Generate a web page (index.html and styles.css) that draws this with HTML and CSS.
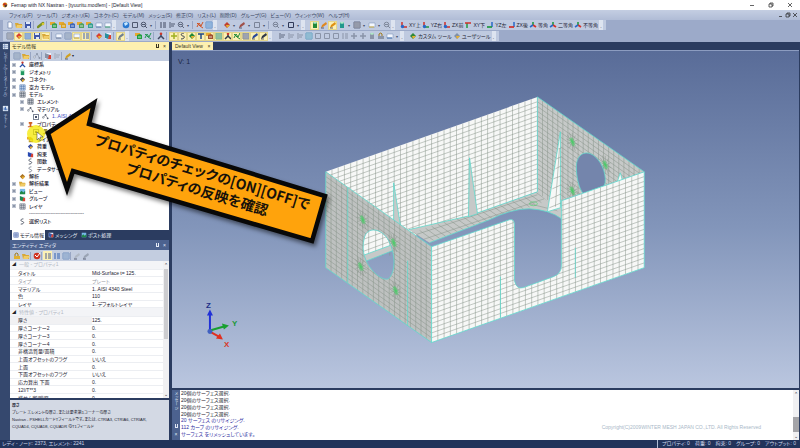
FILE: index.html
```html
<!DOCTYPE html>
<html lang="ja">
<head>
  <meta charset="UTF-8" />
  <title>Femap with NX Nastran</title>
  <meta name="viewport" content="width=device-width, initial-scale=1.0" />
  <link rel="stylesheet" href="styles.css">
</head>
<body>
  <header class="titlebar">
    <svg class="logo" viewBox="0 0 8 8"><circle cx="4" cy="4" r="3.2" fill="#e8a020"/><path d="M1 3l3-2 2 2-3 2z" fill="#c03020"/><path d="M3 5l4-2-1 3-2 1z" fill="#303048"/></svg>
    <span>Femap with NX Nastran - [tyuuritu.modfem] - [Default View]</span>
    <div class="win-btns">
      <button aria-label="最小化"><svg viewBox="0 0 6 6"><path d="M1 3.5h4"/></svg></button>
      <button aria-label="元に戻す"><svg viewBox="0 0 6 6"><path d="M1 2h3v3H1zM2 2V1h3v3H4"/></svg></button>
      <button aria-label="閉じる"><svg viewBox="0 0 6 6"><path d="M1 1l4 4M5 1L1 5"/></svg></button>
    </div>
  </header>

  <nav class="menubar">
    <button>ファイル(F)</button><button>ツール(T)</button><button>ジオメトリ(E)</button><button>コネクト(C)</button><button>モデル(M)</button><button>メッシュ(S)</button><button>修正(O)</button><button>リスト(L)</button><button>削除(D)</button><button>グループ(G)</button><button>ビュー(V)</button><button>ウィンドウ(W)</button><button>ヘルプ(H)</button>
    <div class="win-btns small">
      <button aria-label="最小化"><svg viewBox="0 0 6 6"><path d="M1 4.5h3"/></svg></button>
      <button aria-label="元に戻す"><svg viewBox="0 0 6 6"><path d="M1 2h3v3H1zM2 2V1h3v3H4"/></svg></button>
      <button aria-label="閉じる"><svg viewBox="0 0 6 6"><path d="M1 1l4 4M5 1L1 5"/></svg></button>
    </div>
  </nav>

  <div class="toolbar" id="bar1"></div>
  <div class="toolbar" id="bar2"></div>

  <main class="work">
    <aside class="dock">
      <svg viewBox="0 0 8 8"><path d="M1 1h6v6H1z" fill="#dfe8f5"/><path d="M1 3h6M1 5h6M3 1v6" stroke="#6f88b5" stroke-width=".7"/></svg>
      <button>レポート(データテーブル)</button>
      <svg viewBox="0 0 8 8"><path d="M1 1h6v6H1z" fill="#dfe8f5"/><path d="M2.5 6V3M4 6V2M5.5 6V4" stroke="#3060b0"/></svg>
      <button>チャート</button>
    </aside>

    <section class="side">
      <div class="pane-head active"><h2>モデル情報</h2><i class="pin"></i><button aria-label="閉じる">×</button></div>
      <div class="mini" id="treeBar"></div>
      <div class="tree-box"><ul class="tree" id="tree"></ul></div>
      <div class="tabs">
        <button class="on"><svg viewBox="0 0 8 8"><use href="#i-grid"/></svg>モデル情報</button>
        <button><svg viewBox="0 0 8 8"><use href="#i-flag"/></svg>メッシング</button>
        <button><svg viewBox="0 0 8 8"><use href="#i-view"/></svg>ポスト処理</button>
      </div>
      <div class="pane-head"><h2>エンティティ エディタ</h2><i class="pin"></i><button aria-label="閉じる">×</button></div>
      <div class="mini" id="entityBar"></div>
      <div class="props">
        <table>
          <tbody>
            <tr class="cat"><th colspan="2">一般 - プロパティ1</th></tr>
            <tr><td>タイトル</td><td>Mid-Surface t= 125.</td></tr>
            <tr class="dim"><td>タイプ</td><td>プレート</td></tr>
            <tr><td>マテリアル</td><td>1..AISI 4340 Steel</td></tr>
            <tr><td>色</td><td>110</td></tr>
            <tr><td>レイヤ</td><td>1..デフォルトレイヤ</td></tr>
            <tr class="cat"><th colspan="2">特性値 - プロパティ1</th></tr>
            <tr class="sel"><td>厚さ</td><td>125.</td></tr>
            <tr><td>厚さコーナー2</td><td>0.</td></tr>
            <tr><td>厚さコーナー3</td><td>0.</td></tr>
            <tr><td>厚さコーナー4</td><td>0.</td></tr>
            <tr><td>非構造質量/面積</td><td>0.</td></tr>
            <tr><td>上面オフセットのフラグ</td><td>いいえ</td></tr>
            <tr><td>上面</td><td>0.</td></tr>
            <tr><td>下面オフセットのフラグ</td><td>いいえ</td></tr>
            <tr><td>応力算出 下面</td><td>0.</td></tr>
            <tr><td>12I/T**3</td><td>0.</td></tr>
            <tr><td>横せん断/膜厚</td><td>0.</td></tr>
          </tbody>
        </table>
        <div class="scroll"><i>⌃</i><b></b><i>⌄</i></div>
      </div>
      <div class="help">
        <strong>厚さ</strong>
        <p>プレート エレメントの厚さ、または要素第1コーナーの厚さ</p>
        <p>Nastran - PSHELLカードTフィールドです。または、CTRIA3, CTRIA6, CTRIAR,</p>
        <p>CQUAD4, CQUAD8, CQUADR のT1フィールド</p>
      </div>
    </section>

    <section class="stage">
      <div class="view-tabs"><button>Default View <span>×</span></button></div>
      <div class="canvas">
        <svg id="model" viewBox="172 50 628 338" preserveAspectRatio="xMinYMin slice">
          <defs>
            <clipPath id="c-back"><path d="M326 171L538 96V191L432 229V246z"/></clipPath>
            <clipPath id="c-right"><path clip-rule="evenodd" d="M538 96L645 171L562 200L560 214L538 191zM577 166C577 153 587 148 596 156C604 163 608 177 605 185L584 193C579 187 577 175 577 166z"/></clipPath>
            <clipPath id="c-left"><path clip-rule="evenodd" d="M326 171L432 246V342L326 267zM365 236C368 226 382 227 389 240C396 253 396 270 390 277C386 282 374 274 368 263C362 252 363 243 365 236z"/></clipPath>
            <clipPath id="c-front"><path d="M432 246L510 219Q515 218 515 224V280Q517 289 524 287L554 276Q562 273 562 265V200L645 171V267L432 342z"/></clipPath>
            <clipPath id="c-hole"><path d="M365 236C368 226 382 227 389 240C396 253 396 270 390 277C386 282 374 274 368 263C362 252 363 243 365 236z"/></clipPath>
            <clipPath id="c-floor"><path d="M409 229L470 215L538 191L562 205V218Q550 209 530 208Q512 208 490 219L430 242z"/></clipPath>
          </defs>

          <!-- back wall and floor strip -->
          <path class="white" d="M326 171L538 96V191L410 237z"/>
          <g id="m-back" clip-path="url(#c-back)"></g>
          <path class="gray" d="M409 229L470 215L538 191L562 205V218Q550 209 530 208Q512 208 490 219L430 242z"/>
          <g id="m-floor" clip-path="url(#c-floor)"></g>
          <path class="edge" d="M409 229L470 215L538 191M430 242L490 219Q512 208 530 208Q550 209 562 218"/>
          <path class="gray edge" d="M394 182L394 219L401 226zM470 157L469 216L478 213z"/>

          <!-- far right wall -->
          <path class="gray" d="M538 96L645 171L562 200V214L538 191z"/>
          <g id="m-right" clip-path="url(#c-right)"></g>
          <path class="void edge" d="M577 166C577 153 587 148 596 156C604 163 608 177 605 185L584 193C579 187 577 175 577 166z"/>
          <path class="edge" d="M538 191V96L645 171"/>
          <path class="white edge" d="M561 131V207L548 211z"/>
          <path class="rib" d="M550 207l12-5M551 198l11-5M553 188l9-4M554 178l8-3M556 168l6-3M557 158l5-2M559 148l3-1M556 206l4-58"/>
          <path class="white edge" d="M618 181L621 172L623 179z"/>
          <ellipse class="green" cx="534" cy="203" rx="4" ry="2"/>

          <!-- near left wall -->
          <path class="gray near" fill-rule="evenodd" d="M326 171L432 246V342L326 267zM365 236C368 226 382 227 389 240C396 253 396 270 390 277C386 282 374 274 368 263C362 252 363 243 365 236z"/>
          <g clip-path="url(#c-hole)">
            <path class="white" d="M360 225H398V245L360 259z"/>
            <path class="line" d="M360 240l38-14M360 246l38-14M360 252l38-14M369 225v30M376 225v30M383 225v30M390 225v30"/>
            <path class="gray edge" d="M360 256L398 242V248L360 263z"/>
          </g>
          <g id="m-left" clip-path="url(#c-left)"></g>
          <path class="edge" d="M348 187V282M408 260V325"/>
          <path class="edge" d="M326 171L432 246V342L326 267zM365 236C368 226 382 227 389 240C396 253 396 270 390 277C386 282 374 274 368 263C362 252 363 243 365 236z"/>

          <!-- near right wall with the door cut-out -->
          <path class="white" d="M432 246L510 219Q515 218 515 224V280Q517 289 524 287L554 276Q562 273 562 265V200L645 171V267L432 342z"/>
          <g id="m-front" clip-path="url(#c-front)"></g>
          <path class="edge" d="M432 246L510 219Q515 218 515 224V280Q517 289 524 287L554 276Q562 273 562 265V200L645 171V267L432 342z"/>
          <path class="edge" d="M501 276V317M576 247V277"/>
          <g id="bolts"></g>

          <!-- triad -->
          <path d="M210 331V314" stroke="#2030d8" stroke-width="2"/><path d="M207 315l3-6 3 6z" fill="#2030d8"/>
          <path d="M210 330L224 326" stroke="#18a030" stroke-width="2"/><path d="M222 323l7 2-5 4z" fill="#18a030"/>
          <path d="M210 331L219 336" stroke="#e03020" stroke-width="2"/><path d="M220 333l3 6-7-1z" fill="#e03020"/>
          <circle cx="210" cy="331" r="2.5" fill="#4060c0"/>
          <text x="206" y="307" class="axis z">Z</text><text x="232" y="325" class="axis y">Y</text><text x="224" y="346" class="axis x">X</text>
          <text x="178" y="63" class="vlabel">V: 1</text>
        </svg>
      </div>
      <div class="log">
        <div class="log-side"><span>メッセージ</span><i class="pin"></i><button aria-label="閉じる">×</button></div>
        <div class="log-body">
          <div class="lines">
            <p>20個のサーフェス選択.</p>
            <p>20個のサーフェス選択.</p>
            <p>20個のサーフェス選択.</p>
            <p>20個のサーフェス選択.</p>
            <p class="info">20 サーフェス のリサイジング.</p>
            <p class="info">112 カーブ のリサイジング.</p>
            <p class="info">サーフェス をリメッシュしています。</p>
          </div>
          <small>Copyright(C)2009WINTER MESH JAPAN CO.,LTD. All Rights Reserved</small>
        </div>
        <div class="scroll low"><i>⌃</i><b></b><i>⌄</i></div>
      </div>
    </section>
  </main>

  <footer class="status">
    <span>レディ - ノード: 2373, エレメント: 2241</span>
    <div><span>プロパティ: 0</span><span>荷重: 0</span><span>拘束: 0</span><span>グループ: 0</span><span>アウトプット: 0</span></div>
  </footer>

  <div class="callout">
    <svg viewBox="0 0 310 170">
      <circle cx="16" cy="44" r="9" fill="#f4e800" fill-opacity=".75"/>
      <path class="arrow" d="M28 43L74 13L69 34L305 106L292 151L53 81L47 99z"/>
      <path d="M17 42v8l2-2 1 3 1-1-1-3h3z" fill="#fff" stroke="#333" stroke-width=".5"/>
    </svg>
    <p>プロパティのチェックの[ON][OFF]で<br>プロパティの反映を確認</p>
  </div>

  <svg class="sprite">
    <symbol id="i-new" viewBox="0 0 8 8"><path d="M2 1h3l1 1v5H2z" fill="#fff" stroke="#5870a0" stroke-width=".6"/></symbol>
    <symbol id="i-open" viewBox="0 0 8 8"><path d="M0 2h3l1 1h3v4H1z" fill="#d8a838"/><path d="M2 4h6L6 7H1z" fill="#f0cc68"/></symbol>
    <symbol id="i-save" viewBox="0 0 8 8"><path d="M1 1h6v6H1z" fill="#4058a8"/><path d="M2 1h4v2H2zM3 5h3v2H3z" fill="#dfe8f8"/></symbol>
    <symbol id="i-link" viewBox="0 0 8 8"><path d="M1 6L6 2" stroke="#789020" stroke-width="2.5" stroke-linecap="round"/><circle cx="6" cy="3" r="1.3" fill="#d8c830"/></symbol>
    <symbol id="i-cube" viewBox="0 0 8 8"><path d="M0 1h5v3H0z" fill="#e8a830"/><path d="M2 3l3-1 2 1v4H2z" fill="currentColor"/><path d="M3 5h3" stroke="#fff" stroke-width=".7"/></symbol>
    <symbol id="i-page" viewBox="0 0 8 8"><path d="M1 2h6v4H1z" fill="#f4f8ff" stroke="#7088b0" stroke-width=".5"/><path d="M1 6h5" stroke="currentColor"/></symbol>
    <symbol id="i-ball" viewBox="0 0 8 8"><circle cx="4" cy="4" r="3.3" fill="#2878d0"/><path d="M2 2l3-1 1 2-3 2z" fill="#c8e8ff"/></symbol>
    <symbol id="i-box" viewBox="0 0 8 8"><path d="M1.5 1.5h5v5h-5z" fill="none" stroke="currentColor"/></symbol>
    <symbol id="i-zoom" viewBox="0 0 8 8"><circle cx="3.5" cy="3.5" r="2.3" fill="none" stroke="currentColor"/><path d="M5 5l2 2M2 3.5h3" stroke="currentColor"/></symbol>
    <symbol id="i-grid" viewBox="0 0 8 8"><path d="M1 1h6v6H1z" fill="#eef2f8" stroke="currentColor" stroke-width=".7"/><path d="M1 3h6M1 5h6M3 1v6M5 1v6" stroke="currentColor" stroke-width=".6"/></symbol>
    <symbol id="i-list" viewBox="0 0 8 8"><path d="M1 2h2M1 4h2M1 6h2M4 2h3M4 4h3M4 6h3" stroke="currentColor"/></symbol>
    <symbol id="i-flag" viewBox="0 0 8 8"><path d="M1 1h6v6H1z" fill="#e8f0ff"/><path d="M1 1l5 2-2 4-3-1z" fill="currentColor"/><path d="M5 3h2v4H4z" fill="#d84030"/></symbol>
    <symbol id="i-view" viewBox="0 0 8 8"><path d="M1 1h6v6H1z" fill="#78b8e8"/><path d="M1 5l2-2 2 2 2-2v4H1z" fill="#208848"/></symbol>
    <symbol id="i-pen" viewBox="0 0 8 8"><path d="M1 7l1-3 4-3 1 2-4 3z" fill="currentColor"/><path d="M1 7h3" stroke="#404860" stroke-width=".8"/></symbol>
    <symbol id="i-tri" viewBox="0 0 8 8"><path d="M2 6V1" stroke="#d03028" stroke-width="1.5"/><path d="M2 6h5" stroke="currentColor" stroke-width="1.5"/><circle cx="2.5" cy="5.5" r="1.7" fill="#2868c8"/></symbol>
    <symbol id="i-tri2" viewBox="0 0 8 8"><path d="M3 7V2" stroke="#209840" stroke-width="1.5"/><path d="M1 2h6" stroke="#d03028" stroke-width="1.5"/></symbol>
    <symbol id="i-tri3" viewBox="0 0 8 8"><path d="M6 6V1" stroke="#2868c8" stroke-width="1.5"/><path d="M1 6h5" stroke="currentColor" stroke-width="1.7"/></symbol>
    <symbol id="i-iso" viewBox="0 0 8 8"><path d="M4 5V1" stroke="#209840" stroke-width="1.6"/><path d="M4 4l3 2" stroke="#d83028" stroke-width="1.8"/><path d="M4 4L1 6" stroke="#2868c8" stroke-width="1.6"/></symbol>
    <symbol id="i-tee" viewBox="0 0 8 8"><path d="M1 2h6M4 2v5" stroke="currentColor" stroke-width="1.5"/></symbol>
    <symbol id="i-ibeam" viewBox="0 0 8 8"><path d="M2 1h4v2H5v3h2v1H1V6h2V3H2z" fill="currentColor"/></symbol>
    <symbol id="i-dot" viewBox="0 0 8 8"><path d="M4 1v6M1 4h6" stroke="currentColor" stroke-width="1.5"/></symbol>
    <symbol id="i-cross" viewBox="0 0 8 8"><path d="M1 6l2-4 2 3 2-4M1 2l3 3 3 2" fill="none" stroke="currentColor"/></symbol>
    <symbol id="i-mol" viewBox="0 0 8 8"><path d="M1.5 5L4 2l2.5 4" fill="none" stroke="currentColor" stroke-width=".6"/><circle cx="1.5" cy="5" r="1" fill="#f4f4f4" stroke="currentColor" stroke-width=".6"/><circle cx="4" cy="2" r="1" fill="currentColor"/><circle cx="6.5" cy="6" r="1" fill="currentColor"/></symbol>
    <symbol id="i-curve" viewBox="0 0 8 8"><path d="M5 1C1 1 2 4 4 4s2 3-2 3" fill="none" stroke="currentColor"/></symbol>
    <symbol id="i-bar" viewBox="0 0 8 8"><path d="M2 1v6M3 3h4M3 5h3" stroke="currentColor"/></symbol>
    <symbol id="i-cyl" viewBox="0 0 8 8"><path d="M2 1h4v6H2z" fill="currentColor"/><ellipse cx="4" cy="1.7" rx="2" ry="1" fill="#b0e8c8"/></symbol>
    <symbol id="i-man" viewBox="0 0 8 8"><path d="M4 1v3L1 7M4 4l3 3" fill="none" stroke="currentColor" stroke-width="1.5"/><circle cx="4" cy="1.8" r="1.3" fill="#d03828"/></symbol>
    <symbol id="i-gem" viewBox="0 0 8 8"><path d="M4 1l3 3-3 3-3-3z" fill="currentColor"/><path d="M3 4h4L4 7z" fill="#e8b030"/></symbol>
    <symbol id="i-lock" viewBox="0 0 8 8"><path d="M1 4h6v3H1z" fill="currentColor"/><path d="M2 4V2q2-2 3 0v2" fill="none" stroke="#a07818"/></symbol>
    <symbol id="i-stop" viewBox="0 0 8 8"><circle cx="4" cy="4" r="3.3" fill="#d03020"/><path d="M2 3l2 2 3-4" fill="none" stroke="#fff"/></symbol>
  </svg>

  <script src="app.js"></script>
</body>
</html>
```
FILE: styles.css
```css
* { box-sizing: border-box; }
html, body { height: 100%; }
body {
  margin: 0;
  display: grid;
  grid-template-rows: 10px 10px 11px 11px minmax(0, 1fr) 8px;
  font-family: "Liberation Sans", "Noto Sans CJK JP", sans-serif;
  font-size: 5px;
  line-height: 7px;
  font-feature-settings: "palt";
  color: #1c2230;
  background: #2b3c60;
  overflow: hidden;
}
button {
  font: inherit;
  font-feature-settings: inherit;
  color: inherit;
  padding: 0;
  border: 0;
  background: none;
  white-space: nowrap;
}
p, h2, ul { margin: 0; padding: 0; }
svg { display: block; }
.sprite { position: absolute; width: 0; height: 0; }

/* title and menu */
.titlebar {
  display: flex;
  align-items: center;
  gap: 3px;
  padding-left: 2px;
  background: #fff;
}
.logo { width: 6px; height: 6px; }
.win-btns { margin-left: auto; display: flex; gap: 13px; padding-right: 7px; }
.win-btns svg { width: 6px; height: 6px; fill: none; stroke: #222; stroke-width: .7; }
.win-btns.small { gap: 1px; padding-right: 2px; }
.menubar {
  display: flex;
  align-items: center;
  gap: 4px;
  padding-left: 9px;
  background: linear-gradient(#c4cee2, #b0bcd6);
  color: #3c4864;
}

/* toolbars */
.toolbar { display: flex; background: #9caac9; padding-left: 3px; }
.group {
  display: flex;
  align-items: center;
  padding-left: 2px;
  margin-bottom: 1px;
  background: #bfcae0;
}
.group .tool { width: 9px; height: 9px; display: flex; align-items: center; justify-content: center; }
.group .tool svg { width: 8px; height: 8px; }
.group .tool.hot { background: #fbf0b4; outline: 1px solid #e4d68c; outline-offset: -1px; }
.group .tool.text { width: auto; padding-right: 1px; gap: 1px; }
.group .sep { width: 3px; height: 8px; border-left: 1px solid #98a6c4; margin-left: 1px; }
.group .drop { width: 6px; color: #404c68; text-align: center; font-size: 4px; }
.group .end { width: 4px; align-self: stretch; background: #dde4f0; margin-right: 3px; text-align: center; line-height: 13px; }

/* main area */
.work { display: grid; grid-template-columns: 10px 159px minmax(0, 1fr); min-height: 0; }
.dock {
  display: flex;
  flex-direction: column;
  align-items: center;
  gap: 2px;
  padding-top: 1px;
  background: #35486e;
  color: #c2cee4;
}
.dock svg { width: 7px; height: 7px; }
.dock button { writing-mode: vertical-rl; margin-bottom: 6px; font-size: 4px; font-feature-settings: "vpal"; }
.side { display: flex; flex-direction: column; min-height: 0; background: #2b3c60; }
.pane-head {
  flex: 0 0 10px;
  display: flex;
  align-items: center;
  gap: 4px;
  padding: 0 3px 0 2px;
  background: #4c628f;
  color: #e6ecf8;
}
.pane-head.active { flex-basis: 8px; background: #fdf0b0; color: #3a3420; }
.pane-head h2 { flex: 1; font-size: 5px; font-weight: 400; }
.pin { width: 3px; height: 4px; border: 1px solid currentColor; border-width: 0 1px 1px; }
.mini {
  flex: 0 0 11px;
  display: flex;
  align-items: center;
  padding-left: 2px;
  background: #c3cde0;
}
.mini .tool { width: 9px; height: 9px; display: flex; align-items: center; justify-content: center; }
.mini .tool svg { width: 8px; height: 8px; }
.mini .tool.hot { background: #fbf0b4; }
.mini .sep { width: 2px; height: 8px; border-left: 1px solid #98a6c4; }
.mini .drop { width: 5px; font-size: 4px; }

.tree-box { flex: 0 0 169px; background: #fff; overflow: hidden; }
.tree { list-style: none; display: grid; grid-auto-rows: 1fr; height: 164px; }
.tree li { display: flex; align-items: center; gap: 3px; padding-left: 2px; white-space: nowrap; min-height: 0; font-weight: 500; }
.tree li.l1 { padding-left: 10px; }
.tree li.l2 { padding-left: 23px; }
.tree li svg { width: 7px; height: 7px; flex: none; }
.tree .tog { width: 4px; height: 4px; border: 1px solid #bcc3d0; background: #8c96a8; flex: none; }
.tree .tog.none { visibility: hidden; }
.tree label { display: flex; }
.tree input { width: 6px; height: 6px; margin: 0; flex: none; appearance: none; border: 1px solid #7c8494; background: #fff; }
.tree input:checked { background: linear-gradient(#465068, #465068) center / 2px 2px no-repeat #fff; }
.tree .mat { color: #3848c0; }
.tabs { flex: 0 0 10px; display: flex; gap: 2px; padding-left: 2px; color: #e6ecf8; }
.tabs button { display: flex; align-items: center; gap: 1px; padding: 0 1px; }
.tabs svg { width: 6px; height: 6px; color: #3858a8; }
.tabs .on { background: #fff; color: #1c2230; }

.props { flex: 1 1 0; min-height: 0; display: flex; background: #fff; overflow: hidden; }
.props table { flex: 1; height: 141px; border-collapse: collapse; table-layout: fixed; }
.props td, .props th { padding: 0; line-height: 6px; text-align: left; font-weight: 400; white-space: nowrap; border-bottom: 1px solid #eceef2; }
.props td:first-child { width: 82px; padding-left: 8px; }
.props .cat th { color: #b4b9c4; background: #f3f4f7; padding-left: 7px; }
.props .cat th::before { content: "◢"; color: #222; font-size: 4px; margin: 0 3px 0 -5px; }
.props .dim { color: #989ca6; }
.props .sel td:first-child { background: #f1f1f3; }
.scroll {
  flex: 0 0 6px;
  display: flex;
  flex-direction: column;
  align-items: center;
  background: #f0f0f2;
}
.scroll i { font-style: normal; flex: 0 0 6px; line-height: 8px; }
.scroll b { width: 4px; height: 70px; background: #cdcdd0; margin-bottom: auto; }
.scroll.low b { height: 15px; margin: auto 0 0; background: #a4a4a8; width: 6px; }
.help { flex: 0 0 40px; margin-top: 2px; padding: 2px; background: #d3d9e4; white-space: nowrap; font-size: 4px; }
.help strong { display: block; }

/* drawing view */
.stage { display: flex; flex-direction: column; min-width: 0; padding: 0 1px 0 3px; }
.view-tabs { flex: 0 0 8px; border-bottom: 1px solid #8c9cc0; }
.view-tabs button { height: 8px; padding: 0 3px; background: #fdf0b0; color: #3a3420; }
.view-tabs span { margin-left: 3px; }
.canvas { flex: 1; min-height: 0; background: linear-gradient(#596c98, #8295ba 52%, #bac6df); }
.canvas > svg { width: 100%; height: 100%; }
.white { fill: #f7f8f7; }
.gray { fill: #c6c9c8; }
.gray.near { fill: #bec1c0; }
.void { fill: #7485ac; }
.line { fill: none; stroke: #87948a; stroke-width: .5; }
.rib { fill: none; stroke: #828e84; stroke-width: .5; }
.edge { stroke: #5fd8cc; stroke-width: .8; }
path.edge:not(.white):not(.gray):not(.void) { fill: none; }
.green { fill: none; stroke: #48d468; stroke-width: .6; }
.axis { font-size: 8px; font-weight: 700; }
.axis.x { fill: #d83828; }
.axis.y { fill: #209838; }
.axis.z { fill: #1c2e88; }
.vlabel { font-size: 7px; fill: #1c2748; }

.log { flex: 0 0 50px; margin-top: 2px; display: flex; background: #fff; }
.log-side { flex: 0 0 8px; display: flex; flex-direction: column; align-items: center; gap: 3px; padding: 2px 0; background: #4c628f; color: #dfe6f4; }
.log-side span { writing-mode: vertical-rl; font-size: 4px; font-feature-settings: "vpal"; margin-bottom: auto; }
.log-body { flex: 1; display: flex; justify-content: space-between; padding: 0 32px 0 1px; }
.lines { display: grid; grid-auto-rows: 1fr; height: 47px; }
.lines p { line-height: 7px; min-height: 0; }
.lines .info { color: #2c2ca0; }
.log small { font-size: 5px; color: #a9b8c8; align-self: flex-end; margin-bottom: 9px; }

.status { display: flex; justify-content: space-between; padding: 0 4px 0 2px; background: #22335a; color: #cdd7ea; white-space: nowrap; }
.status div { display: flex; gap: 5px; padding-left: 4px; border-left: 1px solid #b0bcd4; }

/* callout arrow over the panels */
.callout { position: absolute; left: 20px; top: 90px; width: 310px; height: 170px; }
.callout svg { width: 310px; height: 170px; overflow: visible; }
.arrow { fill: #ffa30c; stroke: #080808; stroke-width: 4.5; filter: drop-shadow(2px 3px 2px rgba(0, 0, 0, .5)); }
.callout p {
  position: absolute;
  left: 60px;
  top: 72px;
  width: 240px;
  text-align: center;
  font-family: "Noto Sans CJK JP", sans-serif;
  font-size: 14px;
  line-height: 18px;
  font-weight: 700;
  color: #17120a;
  white-space: nowrap;
  transform: rotate(17deg);
}
```
FILE: app.js
```js
const NS = 'http://www.w3.org/2000/svg';

// name:color, "*" = highlighted, "|" separator, "v" drop arrow, "." end of group
const bar1 = 'new open save | link | cube:#38a050 cube:#d8a020 cube:#4068b8 cube:#50a060 cube:#38a090 page:#6080b0 page:#40a070 . ' +
  'ball box:#505a70 zoom:#505a70 v | list:#404860 bar:#505a70 zoom:#606a80 v | cross:#d05020 grid:#3878c0 . ' +
  'gem:#c04030 v pen:#a05048 v box:#7a8498 v | zoom:#7a8498 v box:#303a58 v . cyl:#208838* pen:#e08820 pen:#e09010* cyl:#20988c v grid:#404860 v page:#d0b040 v zoom:#808a9c .';
const bar2 = 'grid:#606a80 gem:#d84030* grid:#3870b8* save* open* | page:#7080a0 grid:#6078a0 page:#d8b020* list:#4060b0* | gem:#d84030 flag:#2890a0 | pen:#708090* . ' +
  'cube:#20a040 cross:#209850 | man:#404860 | dot:#a0b020* curve:#303848* gem:#208838* tee:#204888* cube:#a05030* grid:#38904c* man:#303848* cross:#208838* grid:#505868* pen:#284898* pen:#303848* . ' +
  'bar:#606a80 bar:#8a94a8 bar:#8a94a8 grid:#3888b0 box:#8a94a8 box:#8a94a8 box:#8a94a8 list:#8a94a8 dot:#8a94a8 dot:#8a94a8 cyl:#8a94a8 lock:#8a94a8 page:#4070b0 v .';

function icon(name, color) {
  return `<svg viewBox="0 0 8 8" style="color:${color || '#404860'}"><use href="#i-${name}"/></svg>`;
}

function part(t) {
  if (t === '|') return '<span class="sep"></span>';
  if (t === 'v') return '<span class="drop">▾</span>';
  const hot = t.endsWith('*');
  const [name, color] = t.replace('*', '').split(':');
  return `<button class="tool${hot ? ' hot' : ''}" aria-label="${name}">${icon(name, color)}</button>`;
}

function toolbar(spec) {
  return spec.split(' .').filter(s => s.trim()).map(g =>
    `<div class="group">${g.trim().split(' ').map(part).join('')}<span class="end">.</span></div>`).join('');
}

function textGroup(items) {
  return '<div class="group">' + items.map(([i, t, c]) =>
    `<button class="tool text">${icon(i, c)}${t}</button>`).join('') + '<span class="end">.</span></div>';
}

document.getElementById('bar1').innerHTML = toolbar(bar1) + textGroup([
  ['tri', 'XY上', '#d03028'], ['tri', 'YZ右', '#209840'], ['tri', 'ZX前', '#d03028'],
  ['tri2', 'XY下'], ['tri3', 'YZ左', '#209840'], ['tri3', 'ZX後', '#d03028'],
  ['iso', '等角'], ['iso', '二等角'], ['iso', '不等角']
]);
document.getElementById('bar2').innerHTML = toolbar(bar2) +
  textGroup([['gem', 'カスタム ツール', '#308838'], ['gem', 'ユーザツール', '#8090a8']]);
document.getElementById('treeBar').innerHTML =
  'grid:#6078a0 open | mol:#8a94a8 | flag:#8a94a8 bar:#a0a8b8 | pen:#d0a020 v'.split(' ').map(part).join('');
document.getElementById('entityBar').innerHTML =
  'lock:#e0b030 open | stop | list:#506090* list:#3060b0 grid:#5078b0 | pen:#b0b8c4 pen:#9aa4b4'.split(' ').map(part).join('');

// level, toggle, icon, color, label
const tree = [
  [0, 1, 'man', '#2850a8', '座標系'], [0, 1, 'cyl', '#209860', 'ジオメトリ'], [0, 1, 'gem', '#404858', 'コネクト'],
  [0, 1, 'grid', '#3868a8', '空力 モデル'], [0, 1, 'grid', '#404858', 'モデル'],
  [1, 1, 'grid', '#404858', 'エレメント'], [1, 1, 'mol', '#505868', 'マテリアル'],
  [2, 0, 'mol', '#505868', '1..AISI 4340 Steel', 'mat'], [1, 1, 'ibeam', '#d06020', 'プロパティ'],
  [2, 0, 'ibeam', '#a09030', '', 'mat'], [1, 0, 'cube', '#c0a030', 'レイアップ'], [1, 0, 'gem', '#3048a8', '荷重'],
  [1, 0, 'flag', '#2848b0', '拘束'], [1, 0, 'curve', '#404858', '関数'], [1, 0, 'curve', '#707888', 'データサーフェス'],
  [0, 0, 'gem', '#a87020', '解析'], [0, 1, 'open', '', '解析結果'], [0, 1, 'view', '', 'ビュー'],
  [0, 1, 'flag', '#208850', 'グループ'], [0, 1, 'grid', '#505868', 'レイヤ'],
  [0, 0, '', '', '---------------------------------'], [0, 0, 'curve', '#404858', '選択リスト']
];
document.getElementById('tree').innerHTML = tree.map(([l, tog, i, c, label, mat]) =>
  `<li class="l${l}">` +
  (mat ? `<label><input type="checkbox" aria-label="${label || 'プロパティ1'}" checked></label>` : `<span class="tog${tog ? '' : ' none'}"></span>`) +
  `${i ? icon(i, c) : '<svg></svg>'}<span class="${mat || ''}">${label}</span></li>`).join('');

// straight mesh on a wall: origin, edge vector, height, divisions
function mesh(id, x, y, dx, dy, h, cols, rows) {
  let d = '';
  for (let i = 1; i < cols; i++) d += `M${x + dx * i / cols} ${y + dy * i / cols}v${h}`;
  for (let j = 1; j < rows; j++) d += `M${x} ${y + h * j / rows}l${dx} ${dy}`;
  add(id, d, 'line');
}
function add(id, d, cls) {
  const p = document.createElementNS(NS, 'path');
  p.setAttribute('d', d);
  p.setAttribute('class', cls);
  document.getElementById(id).appendChild(p);
}
mesh('m-back', 326, 171, 212, -75, 96, 34, 20);
mesh('m-right', 538, 96, 107, 75, 96, 21, 20);
mesh('m-left', 326, 171, 106, 75, 96, 20, 20);
mesh('m-front', 432, 246, 213, -75, 96, 34, 20);

let floor = '';
for (let i = 0; i < 26; i++) floor += `M${402 + i * 6} ${236 - i * 2.1}l14 10`;
floor += 'M413 235L538 194M420 240L545 198M530 203L562 211';
add('m-floor', floor, 'line');

// denser mesh around the bolt holes
[[363, 219], [394, 242], [361, 266], [396, 290], [573, 141], [606, 164], [573, 190]].forEach(([x, y]) => {
  let web = '', star = '';
  for (let a = 0; a < 12; a++) {
    const c = Math.cos(a * Math.PI / 6), s = Math.sin(a * Math.PI / 6);
    web += `M${x} ${y}l${c * 6} ${s * 9 + c * 3}`;
    star += `M${x} ${y}l${c * 3} ${s * 4 + c * 2}`;
  }
  add(x > 500 ? 'm-right' : 'm-left', web, 'line');
  add(x > 500 ? 'm-right' : 'bolts', star, 'green');
});
```
